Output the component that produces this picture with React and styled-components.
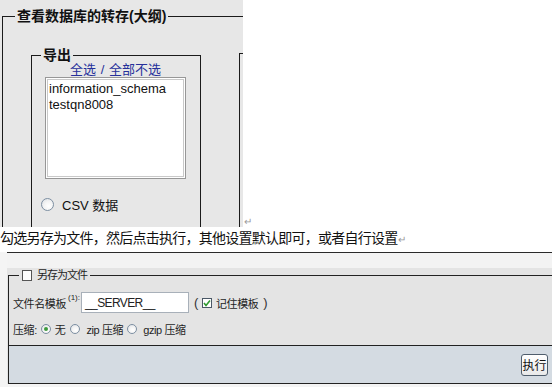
import React from "react";
import styled, { createGlobalStyle } from "styled-components";

const Global = createGlobalStyle`
  html, body { margin: 0; padding: 0; background: #fff; }
  body { font-family: "Liberation Sans", "Noto Sans CJK SC", sans-serif; color: #000; }
`;

const Page = styled.div`
  width: 552px;
  height: 387px;
  overflow: hidden;
  background: #fff;
`;

const TopRow = styled.div`
  display: flex;
  align-items: flex-end;
  height: 227px;
`;

const TopShot = styled.div`
  width: 243px;
  height: 227px;
  box-sizing: border-box;
  overflow: hidden;
  background: #e7e7e7;
  padding: 7px 0 0 2px;
`;

const Mark = styled.span`
  font-size: ${(p) => p.$size || 10}px;
  color: #9a9a9a;
  line-height: 1;
  letter-spacing: 0;
  margin-left: ${(p) => p.$gap || 0}px;
`;

const Fieldset = styled.fieldset`
  margin: ${(p) => p.$top || 0}px 0 0 ${(p) => p.$left || 0}px;
  padding: 0;
  border: 1px solid #1b1b1b;
  min-width: 0;
  width: ${(p) => p.$w}px;
  height: ${(p) => p.$h}px;
  box-sizing: border-box;
  flex: none;
`;

const Legend = styled.legend`
  margin-left: ${(p) => p.$indent}px;
  padding: 0 2px;
  font-size: 14px;
  font-weight: 700;
  line-height: ${(p) => p.$lh}px;
  color: #111;
`;

const FieldRow = styled.div`
  display: flex;
  align-items: flex-start;
  padding-left: 28px;
`;

const SideBox = styled.div`
  margin: 28px 0 0 38px;
  width: 80px;
  height: 300px;
  border: 1px solid #1b1b1b;
  flex: none;
`;

const SelectAll = styled.div`
  width: 141px;
  margin-left: 13px;
  text-align: center;
  font-size: 13px;
  line-height: 14px;
  color: #25309a;
  word-spacing: 1px;
`;

const ListBox = styled.div`
  margin-left: 13px;
  width: 141px;
  height: 102px;
  box-sizing: border-box;
  background: #fff;
  border: 1px solid #979797;
  box-shadow: inset 0 0 0 1px #fff, inset 0 0 0 2px #c9c9c9;
  padding: 3px 3px;
  font-size: 13px;
  line-height: 16px;
  color: #111;
`;

const RadioRow = styled.div`
  display: flex;
  align-items: center;
  gap: 8px;
  margin: 17px 0 0 9px;
  height: 16px;
  font-size: 13px;
  color: #111;
`;

const Radio = styled.span`
  display: inline-block;
  box-sizing: border-box;
  width: ${(p) => p.$size}px;
  height: ${(p) => p.$size}px;
  border-radius: 50%;
  border: 1px solid #7d8fa2;
  background: radial-gradient(circle at 60% 65%, #ffffff 0%, #f4f4f4 45%, #d9dde2 100%);
  position: relative;
  flex: none;
  margin-left: ${(p) => p.$ml || 0}px;
  ${(p) =>
    p.$on &&
    `&::after { content: ""; position: absolute; left: 50%; top: 50%; width: 4px; height: 4px; margin: -2px 0 0 -2px; border-radius: 50%; background: #3d9a3d; }`}
`;

const MainText = styled.p`
  margin: 0;
  padding-top: 1px;
  font-size: 14px;
  line-height: 20px;
  letter-spacing: -0.75px;
  white-space: nowrap;
  color: #111;
`;

const BottomShot = styled.div`
  margin-top: 4px;
  height: 135px;
  background: #f4f4f4;
  padding-left: 7px;
`;

const Panel = styled.div`
  border-top: 1px solid #2a2a2a;
  padding-top: 14px;
  background: #f3f3f3;
`;

const FormArea = styled.div`
  background: #e4e4e4;
  padding-left: 1px;
  font-size: 11px;
  color: #1e1e1e;
`;

const SaveFieldset = styled.fieldset`
  margin: 1px 0 0 0;
  padding: 10px 0 9px 4px;
  border: 1px solid #222;
  border-right: none;
  min-width: 0;
`;

const SaveLegend = styled.legend`
  margin-left: 6px;
  padding: 0 3px;
  line-height: 14px;
  font-size: 11px;
  letter-spacing: -1px;
`;

const LegendInner = styled.span`
  display: flex;
  align-items: center;
  gap: 5px;
`;

const Box = styled.span`
  display: inline-flex;
  align-items: center;
  justify-content: center;
  box-sizing: border-box;
  width: ${(p) => p.$w}px;
  height: ${(p) => p.$h}px;
  border: 1px solid ${(p) => p.$c || "#5b6672"};
  background: #fff;
  flex: none;
  margin-left: ${(p) => p.$ml || 0}px;
`;

const Row = styled.div`
  display: flex;
  align-items: center;
  height: ${(p) => p.$h}px;
  margin-top: ${(p) => p.$mt || 0}px;
  white-space: nowrap;
  letter-spacing: -0.4px;
`;

const Sup = styled.span`
  font-size: 8px;
  letter-spacing: 0;
  align-self: flex-start;
  margin: 1px 0 0 2px;
`;

const TextInput = styled.div`
  margin-left: 1px;
  width: 108px;
  height: 21px;
  box-sizing: border-box;
  border: 1px solid #a8b0b9;
  background: #fff;
  display: flex;
  align-items: center;
  padding-left: 3px;
  font-size: 12px;
  letter-spacing: -0.6px;
  color: #222;
`;

const Paren = styled.span`
  font-size: 13px;
  color: #333;
  margin-left: ${(p) => p.$ml || 0}px;
`;

const Txt = styled.span`
  margin-left: ${(p) => p.$ml || 0}px;
`;

const Footer = styled.div`
  height: 37px;
  background: #d4dbe2;
  border-left: 1px solid #222;
  border-bottom: 1px solid #222;
  display: flex;
  align-items: center;
  justify-content: flex-end;
  padding-right: 4px;
`;

const Button = styled.button`
  width: 27px;
  height: 22px;
  padding: 0;
  border: 1px solid #4f5d6c;
  border-radius: 3px;
  background: linear-gradient(#ffffff, #e9e9e9);
  font-family: "Noto Sans CJK SC", sans-serif;
  font-size: 12px;
  line-height: 1;
  color: #111;
`;

export default function App() {
  return (
    <Page>
      <Global />
      <TopRow>
        <TopShot>
          <Fieldset $w={320} $h={400}>
            <Legend $indent={12} $lh={18}>查看数据库的转存(大纲)</Legend>
            <FieldRow>
              <Fieldset $w={170} $h={300} $top={22}>
                <Legend $indent={9} $lh={16}>导出</Legend>
                <SelectAll>全选 / 全部不选</SelectAll>
                <ListBox>
                  <div>information_schema</div>
                  <div>testqn8008</div>
                </ListBox>
                <RadioRow>
                  <Radio $size={13} />
                  <span>CSV 数据</span>
                </RadioRow>
              </Fieldset>
              <SideBox />
            </FieldRow>
          </Fieldset>
        </TopShot>
        <Mark $gap={1}>↵</Mark>
      </TopRow>
      <MainText>
        勾选另存为文件，然后点击执行，其他设置默认即可，或者自行设置<Mark>↵</Mark>
      </MainText>
      <BottomShot>
        <Panel>
          <FormArea>
            <SaveFieldset>
              <SaveLegend>
                <LegendInner>
                  <Box $w={10} $h={11} $c="#555" />
                  <span>另存为文件</span>
                </LegendInner>
              </SaveLegend>
              <Row $h={21}>
                <span>文件名模板</span>
                <Sup>(1):</Sup>
                <TextInput>__SERVER__</TextInput>
                <Paren $ml={5}>(</Paren>
                <Box $w={10} $h={10} $ml={4} $c="#4a5866">
                  <svg width="8" height="8" viewBox="0 0 8 8">
                    <polyline points="1,4 3,6.5 7,1.5" fill="none" stroke="#2f9a2f" strokeWidth="1.6" />
                  </svg>
                </Box>
                <Txt $ml={4}>记住模板</Txt>
                <Paren $ml={5}>)</Paren>
              </Row>
              <Row $h={14} $mt={9}>
                <span>压缩:</span>
                <Radio $size={10} $ml={4} $on />
                <Txt $ml={4}>无</Txt>
                <Radio $size={10} $ml={5} />
                <Txt $ml={6}>zip 压缩</Txt>
                <Radio $size={10} $ml={4} />
                <Txt $ml={6}>gzip 压缩</Txt>
              </Row>
            </SaveFieldset>
            <Footer>
              <Button>执行</Button>
            </Footer>
          </FormArea>
        </Panel>
      </BottomShot>
    </Page>
  );
}
